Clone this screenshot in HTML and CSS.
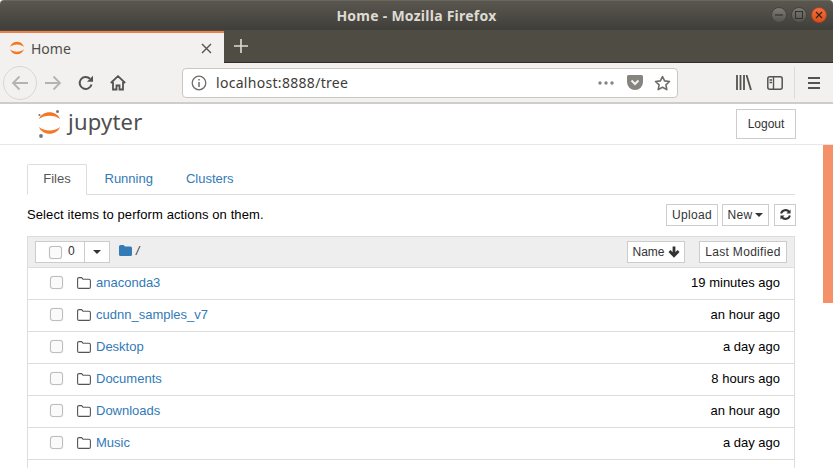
FILE: index.html
```html
<!DOCTYPE html>
<html lang="en">

<head>
    <meta charset="UTF-8">
    <title>Home - Mozilla Firefox</title>
    <link rel="stylesheet" href="styles.css">
</head>

<body>
    <div class="window">
        <div class="titlebar">
            <span class="title">Home - Mozilla Firefox</span>
            <div class="win-btns">
                <span class="win-btn"><svg width="10" height="10" viewBox="0 0 10 10"><path d="M1 5h8" stroke="#33322e" stroke-width="1.2"/></svg></span>
                <span class="win-btn"><svg width="10" height="10" viewBox="0 0 10 10"><rect x="1.5" y="1.5" width="7" height="7" fill="none" stroke="#33322e" stroke-width="1.1"/></svg></span>
                <span class="win-btn win-close"><svg width="10" height="10" viewBox="0 0 10 10"><path d="M2 2l6 6M8 2l-6 6" stroke="#3d2015" stroke-width="1.2"/></svg></span>
            </div>
        </div>

        <div class="tabstrip">
            <div class="tab">
                <svg class="favicon" width="16" height="16" viewBox="0 0 16 16">
                    <path d="M1 7C3 0 13 0 15 7 12 3.500 4 3.500 1 7z" fill="#f37726"/>
                    <path d="M1 9C3 16 13 16 15 9 12 12.500 4 12.500 1 9z" fill="#f37726"/>
                </svg>
                <span class="tab-label">Home</span>
                <svg class="tab-x" width="11" height="11" viewBox="0 0 11 11"><path d="M1 1l9 9M10 1l-9 9" stroke="#55534e" stroke-width="1.4"/></svg>
            </div>
            <svg class="tab-plus" width="14" height="14" viewBox="0 0 14 14"><path d="M7 0v14M0 7h14" stroke="#dedcd6" stroke-width="1.600"/></svg>
        </div>

        <div class="navbar">
            <span class="back-btn">
                <svg width="18" height="16" viewBox="0 0 18 16"><path d="M17 8H2M8.500 1.500L2 8l6.500 6.500" fill="none" stroke="#b4b3b0" stroke-width="1.800"/></svg>
            </span>
            <svg class="nav-fwd" width="18" height="16" viewBox="0 0 18 16"><path d="M1 8h15M9.500 1.500L16 8l-6.500 6.500" fill="none" stroke="#b4b3b0" stroke-width="1.800"/></svg>
            <svg class="nav-reload" width="16" height="16" viewBox="0 0 16 16"><path d="M13.500 9.500A6 6 0 1 1 12 3.800" fill="none" stroke="#55534e" stroke-width="2"/><path d="M15 0.800v6h-6z" fill="#55534e"/></svg>
            <svg class="nav-home" width="16" height="16" viewBox="0 0 16 16"><path d="M0.800 8L8 1.200 15.200 8M3 7v7.500h3.500v-4h3v4H13V7" fill="none" stroke="#55534e" stroke-width="1.800"/></svg>
            <div class="urlbar">
                <svg class="url-info" width="16" height="16" viewBox="0 0 16 16"><circle cx="8" cy="8" r="6.800" fill="none" stroke="#6d6c69" stroke-width="1.300"/><path d="M8 7v5M8 4v1.600" stroke="#6d6c69" stroke-width="1.500"/></svg>
                <span class="url-text">localhost:8888/tree</span>
                <svg class="url-dots" width="16" height="4" viewBox="0 0 16 4"><circle cx="2" cy="2" r="1.700" fill="#85847f"/><circle cx="8" cy="2" r="1.700" fill="#85847f"/><circle cx="14" cy="2" r="1.700" fill="#85847f"/></svg>
                <svg class="url-pocket" width="16" height="15" viewBox="0 0 16 15"><path d="M1.500 0h13A1.500 1.500 0 0 1 16 1.500V7A8 8 0 0 1 0 7V1.500A1.500 1.500 0 0 1 1.500 0z" fill="#85847f"/><path d="M4.500 5.500L8 9l3.500-3.500" fill="none" stroke="#f2f1ef" stroke-width="2"/></svg>
                <svg class="url-star" width="17" height="16" viewBox="0 0 17 16"><path d="M8.500 1.500l2.100 4.400 4.900.6-3.600 3.300.9 4.800-4.300-2.400-4.300 2.400.9-4.800L1.500 6.500l4.900-.6z" fill="none" stroke="#6d6c69" stroke-width="1.600" stroke-linejoin="round"/></svg>
            </div>
            <svg class="nav-library" width="16" height="15" viewBox="0 0 16 15"><path d="M1 0v15M4.500 0v15M8 0v15M10.500 0l4.500 15" fill="none" stroke="#55534e" stroke-width="1.800"/></svg>
            <svg class="nav-sidebar" width="16" height="14" viewBox="0 0 16 14"><rect x="0.800" y="0.800" width="14.400" height="12.400" rx="2" fill="none" stroke="#55534e" stroke-width="1.500"/><path d="M6.500 1v12M2.500 4h2.500M2.500 6.500h2.500" stroke="#55534e" stroke-width="1.400"/></svg>
            <span class="nav-sep"></span>
            <svg class="nav-menu" width="12" height="12" viewBox="0 0 12 12"><path d="M0 1h12M0 6h12M0 11h12" stroke="#55534e" stroke-width="1.800"/></svg>
        </div>

        <div class="page">
            <div class="site-header">
                <div class="logo">
                    <svg width="26" height="30" viewBox="0 0 26 30">
                        <path d="M2 10C5 1 20 1 23 10 18 5.500 7 5.500 2 10z" fill="#f37726"/>
                        <path d="M2 18C5 27 20 27 23 18 18 22.500 7 22.500 2 18z" fill="#f37726"/>
                        <circle cx="20.500" cy="2.500" r="1.500" fill="#767677"/>
                        <circle cx="2.500" cy="6" r="1.100" fill="#767677"/>
                        <circle cx="4" cy="27" r="1.900" fill="#767677"/>
                    </svg>
                    <span class="logo-text">jupyter</span>
                </div>
                <span class="btn logout">Logout</span>
            </div>

            <div class="main">
                <ul class="tabs">
                    <li class="tabs-item active">Files</li>
                    <li class="tabs-item">Running</li>
                    <li class="tabs-item">Clusters</li>
                </ul>

                <div class="toolbar">
                    <span class="hint">Select items to perform actions on them.</span>
                    <div class="toolbar-btns">
                        <span class="btn btn-sm btn-upload">Upload</span>
                        <span class="btn btn-sm btn-new">New <i class="caret"></i></span>
                        <span class="btn btn-sm btn-refresh">
                            <svg width="11" height="11" viewBox="0 0 12 12"><path d="M1.200 5A5 5 0 0 1 10 3.200M10.800 7A5 5 0 0 1 2 8.800" fill="none" stroke="#333" stroke-width="2.200"/><path d="M11.500 0.500v4.500H7zM0.500 11.500V7H5z" fill="#333"/></svg>
                        </span>
                    </div>
                </div>

                <div class="list">
                    <div class="list-head">
                        <div class="select-group">
                            <span class="select-left"><i class="check"></i><span class="count">0</span></span>
                            <span class="select-right"><i class="caret"></i></span>
                        </div>
                        <svg class="crumb-folder" width="13" height="11" viewBox="0 0 13 11"><path d="M0 1.500A1.500 1.500 0 0 1 1.500 0h3L6 1.500h5.500A1.500 1.500 0 0 1 13 3v6.500A1.500 1.500 0 0 1 11.500 11h-10A1.500 1.500 0 0 1 0 9.500z" fill="#337ab7"/></svg>
                        <span class="crumb-slash">/</span>
                        <span class="btn btn-head btn-name">Name
                            <svg width="12" height="12" viewBox="0 0 12 12"><path d="M6 0.500v9M1.500 5L6 9.800 10.500 5" fill="none" stroke="#333" stroke-width="2.800"/></svg>
                        </span>
                        <span class="btn btn-head btn-modified">Last Modified</span>
                    </div>

                    <div class="row"><i class="check"></i><svg class="folder" width="14" height="12" viewBox="0 0 14 12"><use href="#folder-o"/></svg><a class="name">anaconda3</a><span class="time">19 minutes ago</span></div>
                    <div class="row"><i class="check"></i><svg class="folder" width="14" height="12" viewBox="0 0 14 12"><use href="#folder-o"/></svg><a class="name">cudnn_samples_v7</a><span class="time">an hour ago</span></div>
                    <div class="row"><i class="check"></i><svg class="folder" width="14" height="12" viewBox="0 0 14 12"><use href="#folder-o"/></svg><a class="name">Desktop</a><span class="time">a day ago</span></div>
                    <div class="row"><i class="check"></i><svg class="folder" width="14" height="12" viewBox="0 0 14 12"><use href="#folder-o"/></svg><a class="name">Documents</a><span class="time">8 hours ago</span></div>
                    <div class="row"><i class="check"></i><svg class="folder" width="14" height="12" viewBox="0 0 14 12"><use href="#folder-o"/></svg><a class="name">Downloads</a><span class="time">an hour ago</span></div>
                    <div class="row"><i class="check"></i><svg class="folder" width="14" height="12" viewBox="0 0 14 12"><use href="#folder-o"/></svg><a class="name">Music</a><span class="time">a day ago</span></div>
                    <div class="row"></div>
                </div>
            </div>

            <div class="scroll-thumb"></div>
        </div>
    </div>

    <svg width="0" height="0" class="defs">
        <symbol id="folder-o" viewBox="0 0 14 12">
            <path d="M0.600 2A1.400 1.400 0 0 1 2 0.600h2.600L6 2.200h6A1.400 1.400 0 0 1 13.400 3.600V10A1.400 1.400 0 0 1 12 11.400H2A1.400 1.400 0 0 1 0.600 10z" fill="none" stroke="#555" stroke-width="1.100"/>
        </symbol>
    </svg>
</body>

</html>
```

FILE: styles.css
```css
* {
    padding: 0;
    margin: 0;
    box-sizing: border-box;
}

body {
    width: 833px;
    height: 468px;
    overflow: hidden;
    font-family: "Liberation Sans", Arial, sans-serif;
    font-size: 13px;
    color: #000;
    background: #fff;
}

.defs {
    position: absolute;
}

.window {
    width: 833px;
    height: 468px;
    display: flex;
    flex-direction: column;
    overflow: hidden;
}

/* title bar */
.titlebar {
    height: 30px;
    flex: none;
    position: relative;
    display: flex;
    align-items: center;
    justify-content: center;
    background: linear-gradient(#5a5750, #403e39);
    border-top: 1px solid #6a675c;
    border-radius: 4px 4px 0 0;
}

.title {
    font-family: "Noto Sans", sans-serif;
    font-size: 14px;
    font-weight: 700;
    letter-spacing: 0.25px;
    color: #dfdbd2;
}

.win-btns {
    position: absolute;
    right: 6px;
    top: 6px;
    display: flex;
    gap: 4px;
}

.win-btn {
    width: 16px;
    height: 16px;
    border-radius: 50%;
    display: flex;
    align-items: center;
    justify-content: center;
    background: linear-gradient(#7d7b74, #56544e);
    border: 1px solid #45433e;
}

.win-close {
    background: linear-gradient(#f0703f, #dd4f1c);
    border-color: #a8451f;
}

/* tab strip */
.tabstrip {
    height: 33px;
    flex: none;
    display: flex;
    align-items: stretch;
    background: #4f4c43;
    border-bottom: 1px solid #2f2e2a;
}

.tab {
    width: 224px;
    display: flex;
    align-items: center;
    padding-left: 9px;
    background: #f2f1ef;
    border-top: 2px solid #ee7f4b;
    margin-top: 1px;
    margin-bottom: -1px;
}

.favicon {
    flex: none;
}

.tab-label {
    margin-left: 6px;
    font-family: "Noto Sans", sans-serif;
    font-size: 14px;
    color: #4e4d49;
}

.tab-x {
    margin-left: auto;
    margin-right: 12px;
}

.tab-plus {
    margin: 9px 0 0 10px;
}

/* nav bar */
.navbar {
    height: 41px;
    flex: none;
    display: flex;
    align-items: center;
    background: #f2f1ef;
    border-bottom: 2px solid #cfcdc9;
    padding-left: 3px;
}

.back-btn {
    width: 34px;
    height: 34px;
    border-radius: 50%;
    border: 1px solid #d8d7d4;
    display: flex;
    align-items: center;
    justify-content: center;
    flex: none;
}

.nav-fwd {
    margin-left: 7px;
}

.nav-reload {
    margin-left: 16px;
}

.nav-home {
    margin-left: 16px;
}

.urlbar {
    width: 496px;
    height: 30px;
    margin-left: 56px;
    display: flex;
    align-items: center;
    background: #fff;
    border: 1px solid #c8c7c3;
    border-radius: 4px;
    padding-left: 8px;
}

.url-text {
    margin-left: 9px;
    font-family: "Noto Sans", sans-serif;
    font-size: 14px;
    letter-spacing: 0.3px;
    color: #3d3c39;
}

.url-dots {
    margin-left: auto;
}

.url-pocket {
    margin-left: 13px;
}

.url-star {
    margin-left: 11px;
    margin-right: 6px;
}

.nav-library {
    margin-left: 58px;
}

.nav-sidebar {
    margin-left: 15px;
}

.nav-sep {
    width: 1px;
    height: 32px;
    margin-left: 11px;
    background: #dcdbd8;
}

.nav-menu {
    margin-left: 13px;
}

/* page */
.page {
    flex: 1;
    position: relative;
    overflow: hidden;
    background: #fff;
}

.site-header {
    height: 41px;
    display: flex;
    align-items: center;
    justify-content: space-between;
    padding: 0 37px 0 37px;
    border-bottom: 1px solid #e7e7e7;
}

.logo {
    display: flex;
    align-items: center;
}

.logo-text {
    margin-left: 5px;
    margin-top: -6px;
    font-family: "Noto Sans", sans-serif;
    font-size: 22px;
    letter-spacing: 0.2px;
    line-height: 30px;
    color: #4e4e4e;
}

.btn {
    display: inline-flex;
    align-items: center;
    justify-content: center;
    background: #fff;
    border: 1px solid #ccc;
    color: #333;
    font-size: 12px;
    letter-spacing: 0.3px;
}

.logout {
    width: 60px;
    height: 30px;
    margin-top: -1px;
    letter-spacing: 0;
}

.main {
    width: 768px;
    margin-left: 27px;
    padding-top: 19px;
}

.tabs {
    height: 31px;
    display: flex;
    list-style: none;
    border-bottom: 1px solid #ddd;
}

.tabs-item {
    height: 30px;
    padding: 0 15.5px 2px;
    margin-right: 2px;
    display: flex;
    align-items: center;
    color: #337ab7;
}

.tabs-item.active {
    width: 60px;
    height: 31px;
    padding: 0 0 3px;
    justify-content: center;
    color: #555;
    background: #fff;
    border: 1px solid #ddd;
    border-bottom-color: #fff;
    border-radius: 2px 2px 0 0;
}

.toolbar {
    height: 41px;
    display: flex;
    align-items: center;
    justify-content: space-between;
    padding-bottom: 2px;
}

.hint {
    letter-spacing: 0.1px;
}

.toolbar-btns {
    display: flex;
    gap: 4px;
    margin-right: -1px;
}

.btn-sm {
    height: 22px;
}

.btn-upload {
    width: 52px;
}

.btn-new {
    width: 47px;
    gap: 3px;
}

.btn-refresh {
    margin-left: 1px;
    width: 22px;
}

.caret {
    display: inline-block;
    width: 0;
    height: 0;
    border-top: 4px solid #333;
    border-left: 4px solid transparent;
    border-right: 4px solid transparent;
}

/* file list */
.list {
    border: 1px solid #ddd;
    border-top: 0;
}

.list-head {
    height: 32px;
    display: flex;
    align-items: center;
    padding: 0 7px;
    background: #eee;
    border-top: 1px solid #ddd;
    border-bottom: 1px solid #ddd;
}

.select-group {
    display: flex;
    width: 75px;
    height: 22px;
    background: #fff;
    border: 1px solid #ccc;
}

.select-left {
    width: 49px;
    display: flex;
    align-items: center;
    padding-left: 13px;
    border-right: 1px solid #ccc;
}

.count {
    margin-left: 6px;
    margin-top: -3px;
    font-size: 12px;
    color: #333;
}

.select-right {
    flex: 1;
    display: flex;
    align-items: center;
    justify-content: center;
}

.check {
    display: block;
    flex: none;
    width: 13px;
    height: 13px;
    background: #fafafa;
    border: 1px solid #bdbdbd;
    border-radius: 3px;
    box-shadow: 0 0 1px #ccc;
}

.crumb-folder {
    margin-left: 9px;
    margin-top: -4px;
}

.crumb-slash {
    margin-left: 4px;
    margin-top: -3px;
    font-size: 12px;
    font-style: italic;
    color: #333;
}

.btn-head {
    height: 22px;
    font-size: 12px;
}

.btn-name {
    width: 58px;
    gap: 3px;
    margin-left: auto;
    letter-spacing: 0;
}

.btn-modified {
    width: 88px;
    margin-left: 14px;
}

.row {
    height: 32px;
    display: flex;
    align-items: center;
    padding: 0 14px 2px 22px;
    border-bottom: 1px solid #ddd;
}

.folder {
    margin-left: 14px;
}

.name {
    margin-left: 5px;
    color: #337ab7;
}

.time {
    margin-left: auto;
}

.scroll-thumb {
    position: absolute;
    right: 0;
    top: 41px;
    width: 10px;
    height: 158px;
    background: #f59169;
}
```
